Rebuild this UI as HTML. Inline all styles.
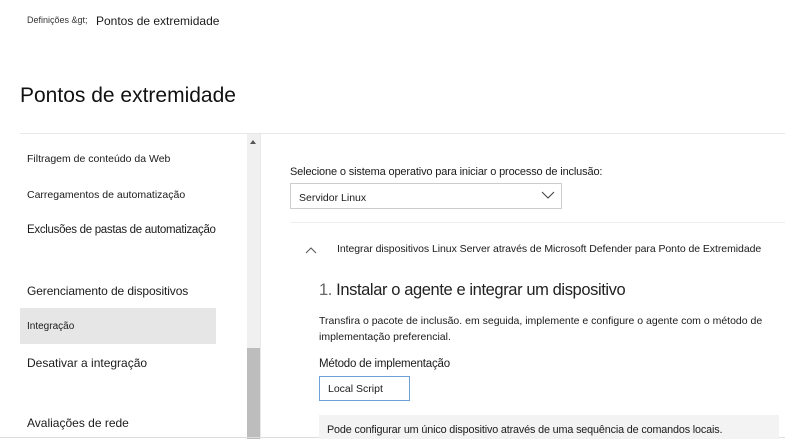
<!DOCTYPE html>
<html><head><meta charset="utf-8"><style>
*{margin:0;padding:0;box-sizing:border-box}
body{width:785px;height:439px;overflow:hidden;background:#fff;font-family:"Liberation Sans",sans-serif;color:#1b1b1b;position:relative}
.a{position:absolute;white-space:nowrap}
</style></head><body>
<div class="a" style="left:27px;top:15px;font-size:9px;color:#333">Definições &amp;gt;</div>
<div class="a" style="left:96px;top:14px;font-size:12px">Pontos de extremidade</div>
<div class="a" style="left:20px;top:84px;font-size:21px;color:#111">Pontos de extremidade</div>
<div class="a" style="left:20px;top:133px;width:765px;height:1px;background:#e8e8e8"></div>
<div class="a" style="left:247px;top:134px;width:13px;height:305px;background:#f0f0f0"></div>
<div class="a" style="left:247px;top:348px;width:13px;height:91px;background:#bdbdbd"></div>
<div class="a" style="left:250px;top:140px;width:0;height:0;border-left:3.5px solid transparent;border-right:3.5px solid transparent;border-bottom:4px solid #555"></div>
<div class="a" style="left:260px;top:134px;width:1px;height:305px;background:#e8e8e8"></div>
<div class="a" style="left:27px;top:153px;font-size:10.5px">Filtragem de conteúdo da Web</div>
<div class="a" style="left:27px;top:189px;font-size:10.5px">Carregamentos de automatização</div>
<div class="a" style="left:27px;top:224px;font-size:11.5px;letter-spacing:-0.3px">Exclusões de pastas de automatização</div>
<div class="a" style="left:27px;top:284px;font-size:12px;letter-spacing:-0.1px">Gerenciamento de dispositivos</div>
<div class="a" style="left:20px;top:308px;width:196px;height:36px;background:#e6e6e6"></div>
<div class="a" style="left:27px;top:321px;font-size:10px">Integração</div>
<div class="a" style="left:27px;top:356px;font-size:12px">Desativar a integração</div>
<div class="a" style="left:27px;top:416px;font-size:12px">Avaliações de rede</div>
<div class="a" style="left:0;top:437px;width:785px;height:1px;background:#ddd"></div>

<div class="a" style="left:290px;top:166px;font-size:11px;letter-spacing:-0.15px">Selecione o sistema operativo para iniciar o processo de inclusão:</div>
<div class="a" style="left:290px;top:183px;width:272px;height:26px;border:1px solid #ccc"></div>
<div class="a" style="left:299px;top:192px;font-size:10.5px">Servidor Linux</div>
<svg class="a" style="left:541px;top:191px" width="14" height="9"><path d="M1 1l6 6 6-6" fill="none" stroke="#444" stroke-width="1.1"/></svg>
<div class="a" style="left:290px;top:222px;width:495px;height:1px;background:#eee"></div>
<svg class="a" style="left:305px;top:246px" width="12" height="8"><path d="M1 7l5-5 5 5" fill="none" stroke="#555" stroke-width="1"/></svg>
<div class="a" style="left:337px;top:243px;font-size:10.5px;letter-spacing:-0.06px">Integrar dispositivos Linux Server através de Microsoft Defender para Ponto de Extremidade</div>
<div class="a" style="left:319px;top:281px;font-size:16.5px;letter-spacing:-0.4px;color:#222"><span style="color:#666">1.</span> Instalar o agente e integrar um dispositivo</div>
<div class="a" style="left:319px;top:313px;font-size:10.5px;line-height:16px">Transfira o pacote de inclusão. em seguida, implemente e configure o agente com o método de<br>implementação preferencial.</div>
<div class="a" style="left:319px;top:358px;font-size:11.5px;letter-spacing:-0.2px">Método de implementação</div>
<div class="a" style="left:319px;top:376px;width:91px;height:25px;border:1px solid #6ea0d6"></div>
<div class="a" style="left:328px;top:383px;font-size:10.5px">Local Script</div>
<div class="a" style="left:319px;top:415px;width:460px;height:24px;background:#f3f3f3"></div>
<div class="a" style="left:327px;top:424px;font-size:10.8px;letter-spacing:-0.15px">Pode configurar um único dispositivo através de uma sequência de comandos locais.</div>
</body></html>
